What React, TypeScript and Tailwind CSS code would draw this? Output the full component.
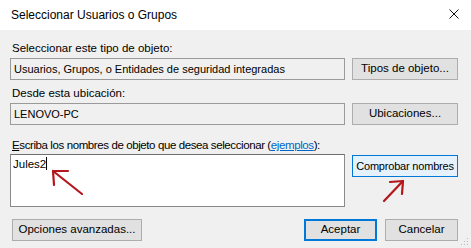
import React from 'react';

const dlgFont = { fontFamily: '"Liberation Sans", Arial, sans-serif' };

const WinButton: React.FC<{ label: string; className?: string; variant?: 'normal' | 'hover' | 'default' }> = ({
  label,
  className = '',
  variant = 'normal',
}) => {
  const look =
    variant === 'hover'
      ? 'bg-[#e5f1fb] border border-[#0078d7]'
      : variant === 'default'
      ? 'bg-[#e1e1e1] border-2 border-[#0078d7]'
      : 'bg-[#e1e1e1] border border-[#adadad]';
  return (
    <button
      className={`h-[22px] flex items-center justify-center whitespace-nowrap text-[11.5px] text-black ${look} ${className}`}
    >
      {label}
    </button>
  );
};

const App: React.FC = () => {
  return (
    <div className="w-[471px] h-[248px] flex flex-col bg-[#f0f0f0] overflow-hidden" style={dlgFont}>
      {/* title bar */}
      <div className="h-[30px] bg-white flex items-center justify-between pl-[11px] pr-[12px]">
        <span className="text-[12px] text-black">Seleccionar Usuarios o Grupos</span>
        <svg width="10" height="10" viewBox="0 0 10 10" className="mt-[-2px]">
          <path d="M0.5 0.5 L9.5 9.5 M9.5 0.5 L0.5 9.5" stroke="#111" strokeWidth="1" />
        </svg>
      </div>

      {/* body */}
      <div className="flex-1 flex flex-col pl-[10px] pr-[13px] pt-[11px] relative">
        <div className="h-[14px] leading-[14px] text-[11.5px] pl-[2px]">Seleccionar este tipo de objeto:</div>
        <div className="mt-[3px] flex gap-[7px]">
          <div className="flex-1 h-[22px] border border-[#9a9a9a] bg-[#f0f0f0] flex items-center pl-[3px] text-[11px]">
            Usuarios, Grupos, o Entidades de seguridad integradas
          </div>
          <WinButton label="Tipos de objeto..." className="w-[106px]" />
        </div>

        <div className="mt-[6px] h-[14px] leading-[14px] text-[11.5px] pl-[2px]">Desde esta ubicación:</div>
        <div className="mt-[3px] flex gap-[7px]">
          <div className="flex-1 h-[22px] border border-[#9a9a9a] bg-[#f0f0f0] flex items-center pl-[3px] text-[11px]">
            LENOVO-PC
          </div>
          <WinButton label="Ubicaciones..." className="w-[106px]" />
        </div>

        <div className="mt-[13px] h-[14px] leading-[14px] text-[11.5px] tracking-[-0.4px] pl-[2px] whitespace-nowrap">
          <span className="underline">E</span>scriba los nombres de objeto que desea seleccionar (
          <span className="text-[#0066cc] underline">ejemplos</span>):
        </div>
        <div className="mt-[2px] flex gap-[7px] items-start">
          <div className="flex-1 h-[53px] bg-white border border-[#8a8a8a] border-t-[#6e6e6e] pl-[2px] pt-[2px] text-[11.5px] leading-[14px]">
            Jules2<span className="inline-block w-[1px] h-[13px] bg-black align-[-2px]" />
          </div>
          <WinButton
            label="Comprobar nombres"
            variant="hover"
            className="w-[106px] mt-[1px] !text-[11px] tracking-[-0.2px]"
          />
        </div>

        <div className="mt-[12px] flex items-center">
          <WinButton label="Opciones avanzadas..." className="w-[130px] ml-[2px]" />
          <div className="flex-1" />
          <WinButton label="Aceptar" variant="default" className="w-[73px]" />
          <WinButton label="Cancelar" className="w-[73px] ml-[8px]" />
        </div>

        {/* red arrows drawn over the dialog */}
        <svg className="absolute left-0 top-0 pointer-events-none" width="471" height="218" viewBox="0 30 471 218">
          <g stroke="#b3161b" strokeWidth="2.2" fill="none" strokeLinecap="round" strokeLinejoin="round">
            <path d="M82 194 L53 171" />
            <path d="M68 171 L53 171 L54 185" />
            <path d="M384 201 L403 181" />
            <path d="M390 182 L403 181 L402 194" />
          </g>
        </svg>

        {/* resize grip */}
        <svg className="absolute right-[2px] bottom-[2px]" width="9" height="9" viewBox="0 0 9 9">
          <g fill="#b8b8b8">
            <rect x="7" y="1" width="1" height="1" />
            <rect x="4" y="4" width="1" height="1" />
            <rect x="7" y="4" width="1" height="1" />
            <rect x="1" y="7" width="1" height="1" />
            <rect x="4" y="7" width="1" height="1" />
            <rect x="7" y="7" width="1" height="1" />
          </g>
        </svg>
      </div>
    </div>
  );
};

export default App;
